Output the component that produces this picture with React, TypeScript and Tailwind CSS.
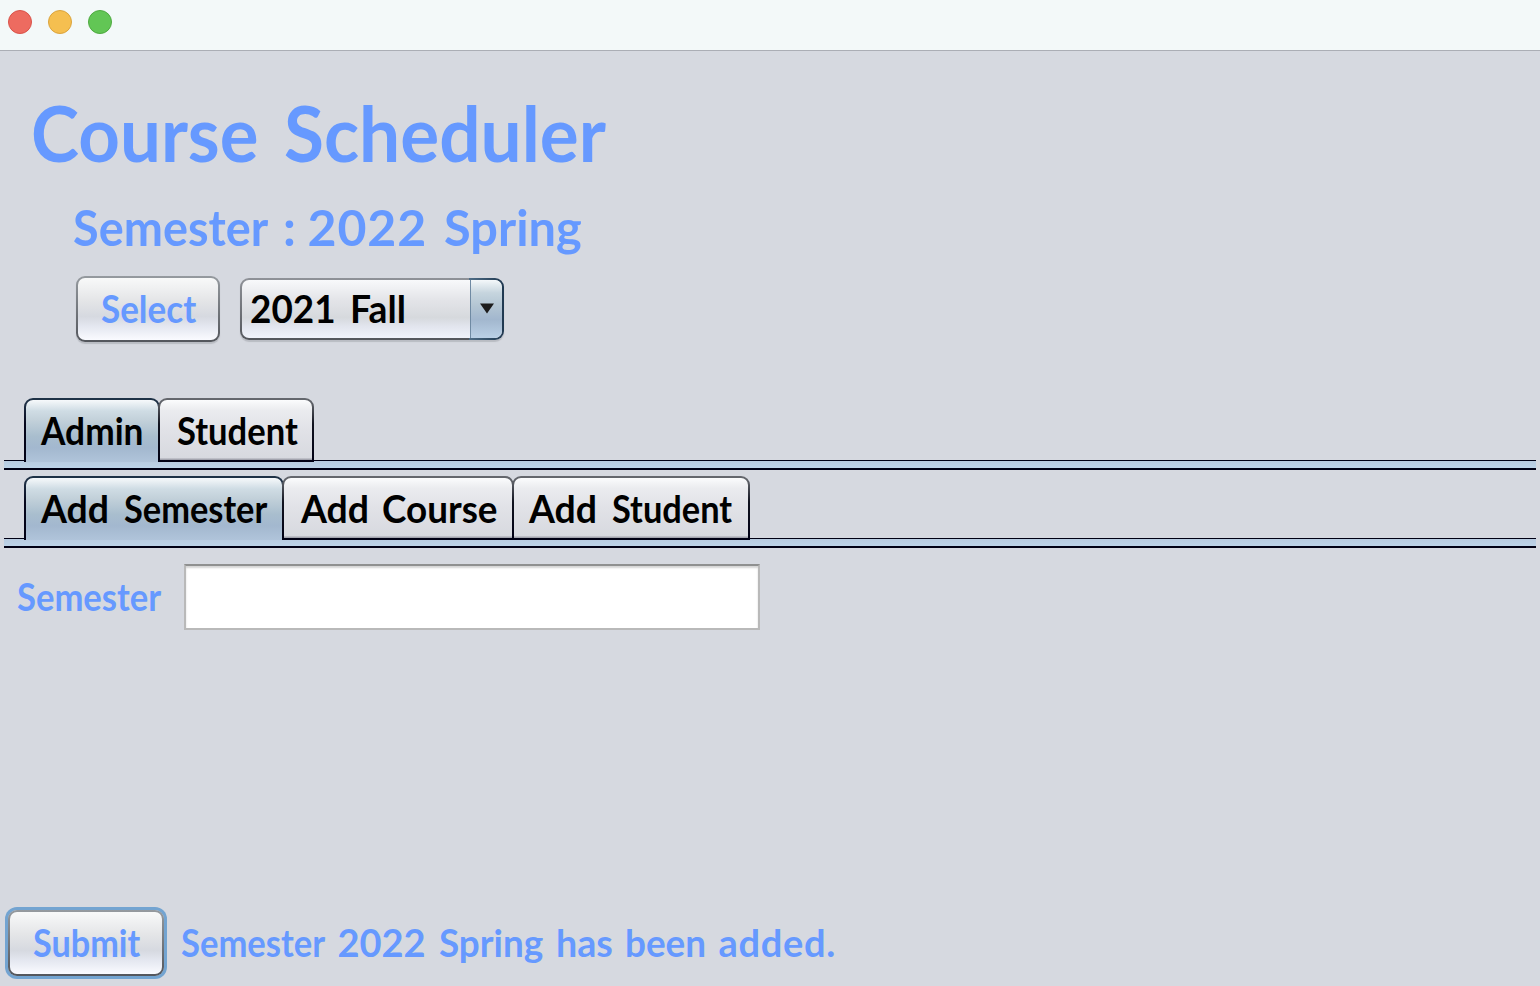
import React from "react";

type WordSpec = [text: string, className: string];

function Words({ items }: { items: WordSpec[] }) {
  return (
    <span className="flex text-left whitespace-pre">
      {items.map(([text, className], i) => (
        <span key={i} className={`shrink-0 origin-left ${className}`}>
          {i < items.length - 1 ? `${text} ` : text}
        </span>
      ))}
    </span>
  );
}

function Tab({ items, selected = false, className }: { items: WordSpec[]; selected?: boolean; className: string }) {
  const skin = selected
    ? "border-b-0 pb-[3px] [background:linear-gradient(#f6f9fb_0,#cfdce4_11px,#c3d1da_20px,#a9bece_36px,#a3b8cf_48px,#b0c4da_62px)_padding-box,linear-gradient(#1f3347_0,#1c2c42_8px,#05061c_26px,#000014_100%)_border-box]"
    : "pb-px [background:linear-gradient(#fbfcfd_0,#ebecef_10px,#e1e2e7_30px,#d7d9df_58px,#a3a4ae_59px,#a3a4ae_60px)_padding-box,linear-gradient(#66696f_0,#55585f_8px,#11131f_26px,#000014_100%)_border-box]";
  return (
    <button
      role="tab"
      aria-selected={selected}
      className={`flex h-16 shrink-0 items-center rounded-t-[9px] border-2 border-transparent text-black ${skin} ${className}`}
    >
      <Words items={items} />
    </button>
  );
}

function TabBar({ children }: { children: React.ReactNode }) {
  return (
    <div className="px-1">
      <div role="tablist" className="relative z-10 -mb-0.5 flex pl-5">
        {children}
      </div>
      <div className="h-2.5 border-t border-b-2 border-[#000014] bg-linear-to-b from-[#b8cbe0] to-[#bcd3e8]" />
    </div>
  );
}

const buttonSkin =
  "flex items-center rounded-[9px] border-2 border-transparent [background:linear-gradient(#f8f9f9_0,#e5e6e8_35%,#d6d9e0_62%,#e4e7f0_78%,#fafbff_100%)_padding-box,linear-gradient(#959a9f,#53565c)_border-box]";

export default function App() {
  return (
    <div className="flex h-[986px] w-[1540px] flex-col overflow-hidden bg-[#d6d9e0] font-['Lato',sans-serif] text-[38px] leading-[46px] font-bold text-[#6699ff]">
      <header className="flex h-[51px] shrink-0 gap-4 border-b border-[#abaeb5] bg-[#f3f9f9] pt-2.5 pl-2">
        <span className="size-6 rounded-full border border-[#d9534a] bg-[#ed6b60]" />
        <span className="size-6 rounded-full border border-[#dba43d] bg-[#f5bf50]" />
        <span className="size-6 rounded-full border border-[#4eaa40] bg-[#62c655]" />
      </header>

      <section className="flex h-[347px] shrink-0 flex-col">
        <h1 className="mt-[42px] ml-[31px] text-[76px] leading-[80px]">
          <Words items={[["Course", "w-[253px] scale-x-[0.955]"], ["Scheduler", "scale-x-[0.96]"]]} />
        </h1>
        <h2 className="mt-[24px] ml-[73px] text-[50px] leading-[60px]">
          <Words
            items={[
              ["Semester", "w-[210px] scale-x-[0.937]"],
              [":", "w-[24.5px]"],
              ["2022", "w-[136px] tracking-[0.9px]"],
              ["Spring", "scale-x-[0.975]"],
            ]}
          />
        </h2>
        <div className="mt-[19px] ml-[76px] flex items-center gap-5">
          <button className={`h-[66px] w-36 pb-[3px] pl-[23px] shadow-[0_2px_1px_#b9bcc3] ${buttonSkin}`}>
            <Words items={[["Select", "scale-x-[0.922]"]]} />
          </button>
          <button className="flex h-[62px] w-[264px] items-stretch overflow-hidden rounded-[9px] border-2 border-transparent shadow-[0_2px_1px_#b9bcc3] [background:linear-gradient(#f8f9fb_0,#e3e4e8_35%,#d6d9dd_65%,#e2e5ee_80%,#f0f3fb_100%)_padding-box,linear-gradient(to_right,#53565c00_229px,#4f6d87_229px,#1f3850)_border-box,linear-gradient(#8f9298,#53565c)_border-box]">
            <span className="flex w-[228px] items-center pb-[3px] pl-2 text-black">
              <Words items={[["2021", "w-[100px] scale-x-[0.97]"], ["Fall", "scale-x-[0.98]"]]} />
            </span>
            <span className="flex grow items-center justify-center rounded-r-[7px] border-l border-[#6f8aa3] bg-[linear-gradient(#f4f8fa_0,#c6d5de_22%,#b3c5d3_45%,#a2b7ce_68%,#bad0e6_100%)] pb-px pl-px">
              <svg width="14" height="11" viewBox="0 0 14 11">
                <path d="M0 .5h14L7 10.5z" fill="#1c1c1c" />
              </svg>
            </span>
          </button>
        </div>
      </section>

      <TabBar>
        <Tab selected className="w-[136px] pl-[15px]" items={[["Admin", "scale-x-[0.928]"]]} />
        <Tab className="-ml-0.5 w-[156px] pl-[17px]" items={[["Student", "scale-x-[0.91]"]]} />
      </TabBar>

      <div className="mt-1.5">
        <TabBar>
          <Tab selected className="w-[260px] pl-[15px]" items={[["Add", "w-[82.5px] scale-x-[0.985]"], ["Semester", "scale-x-[0.905]"]]} />
          <Tab className="-ml-0.5 w-[232px] pl-[17px]" items={[["Add", "w-[81px] scale-x-[0.985]"], ["Course", "scale-x-[0.97]"]]} />
          <Tab className="-ml-0.5 w-[238px] pl-[15px]" items={[["Add", "w-[82.5px] scale-x-[0.985]"], ["Student", "scale-x-[0.905]"]]} />
        </TabBar>
      </div>

      <main className="flex grow flex-col justify-between pt-4 pb-2.5">
        <div className="flex items-center">
          <label htmlFor="semester" className="w-[184px] pb-0.5 pl-[17px]">
            <Words items={[["Semester", "scale-x-[0.91]"]]} />
          </label>
          <input
            id="semester"
            className="h-[66px] w-[576px] border-2 border-[#b9b9b9] border-t-[#8f9090] bg-white px-2 text-black shadow-[inset_0_2px_2px_#d5d5d5] outline-none"
          />
        </div>
        <div className="flex items-center pl-2">
          <button className={`h-[66px] w-[156px] pb-[3px] pl-[23px] shadow-[0_0_0_3px_#73a4d1] ${buttonSkin}`}>
            <Words items={[["Submit", "scale-x-[0.9]"]]} />
          </button>
          <div className="ml-[17px] pb-[3px]">
            <Words
              items={[
                ["Semester", "w-[156.5px] scale-x-[0.91]"],
                ["2022", "w-[101px]"],
                ["Spring", "w-[117px] scale-x-[0.97]"],
                ["has", "w-[69px] scale-x-[0.99]"],
                ["been", "w-[94px] scale-x-[0.97]"],
                ["added.", "tracking-[0.7px]"],
              ]}
            />
          </div>
        </div>
      </main>
    </div>
  );
}
